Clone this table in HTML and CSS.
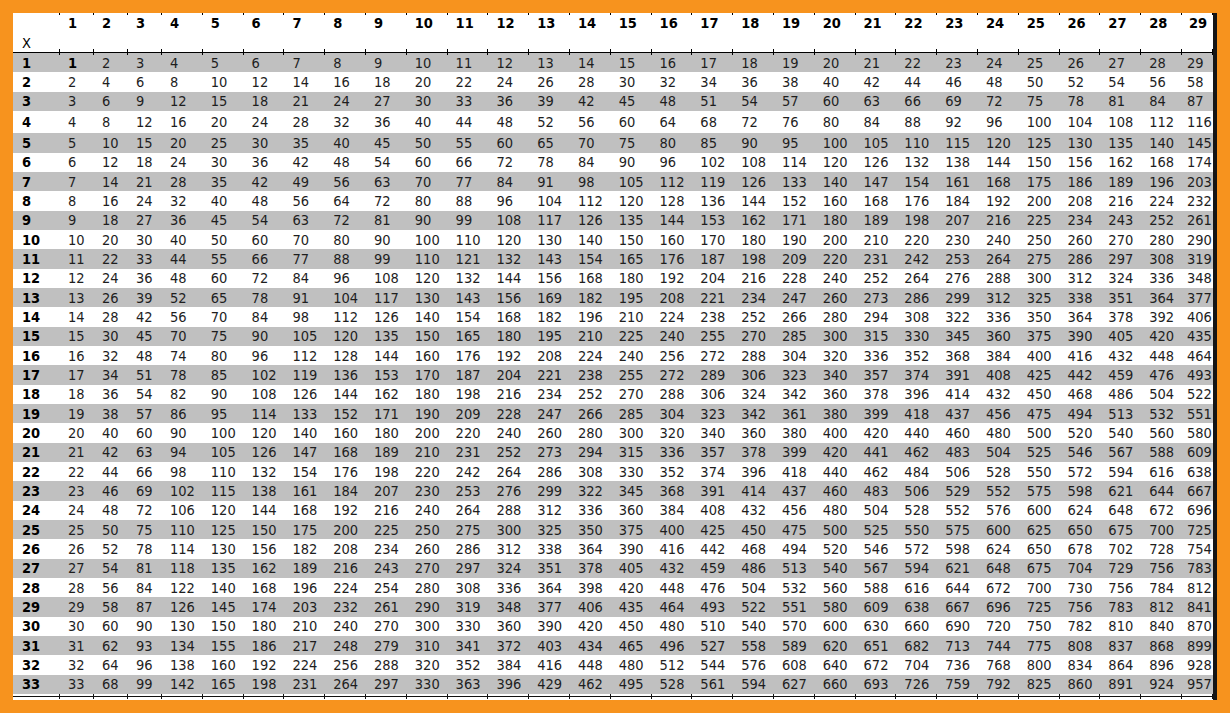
FILE: index.html
```html
<!DOCTYPE html>
<html>
<head>
<meta charset="utf-8">
<title>Multiplication table</title>
<link rel="stylesheet" href="styles.css">
</head>
<body>
<div class="sheet">
<table class="grid">
<colgroup><col class="w-lbl"><col class="w-s"><col class="w-s"><col class="w-s"><col class="w-m"><col class="w-m"><col class="w-m"><col class="w-m"><col class="w-m"><col class="w-m"><col class="w-m"><col class="w-m"><col class="w-m"><col class="w-m"><col class="w-m"><col class="w-m"><col class="w-m"><col class="w-m"><col class="w-m"><col class="w-m"><col class="w-m"><col class="w-m"><col class="w-m"><col class="w-m"><col class="w-m"><col class="w-m"><col class="w-m"><col class="w-m"><col class="w-m"><col class="w-e"></colgroup>
<thead>
<tr class="h1"><td></td><td>1</td><td>2</td><td>3</td><td>4</td><td>5</td><td>6</td><td>7</td><td>8</td><td>9</td><td>10</td><td>11</td><td>12</td><td>13</td><td>14</td><td>15</td><td>16</td><td>17</td><td>18</td><td>19</td><td>20</td><td>21</td><td>22</td><td>23</td><td>24</td><td>25</td><td>26</td><td>27</td><td>28</td><td>29</td></tr>
<tr class="h2"><td class="x">X</td><td></td><td></td><td></td><td></td><td></td><td></td><td></td><td></td><td></td><td></td><td></td><td></td><td></td><td></td><td></td><td></td><td></td><td></td><td></td><td></td><td></td><td></td><td></td><td></td><td></td><td></td><td></td><td></td><td></td></tr>
</thead>
<tbody>
<tr class="r g first"><th>1</th><td class="b">1</td><td>2</td><td>3</td><td>4</td><td>5</td><td>6</td><td>7</td><td>8</td><td>9</td><td>10</td><td>11</td><td>12</td><td>13</td><td>14</td><td>15</td><td>16</td><td>17</td><td>18</td><td>19</td><td>20</td><td>21</td><td>22</td><td>23</td><td>24</td><td>25</td><td>26</td><td>27</td><td>28</td><td>29</td></tr>
<tr class="r"><th>2</th><td>2</td><td>4</td><td>6</td><td>8</td><td>10</td><td>12</td><td>14</td><td>16</td><td>18</td><td>20</td><td>22</td><td>24</td><td>26</td><td>28</td><td>30</td><td>32</td><td>34</td><td>36</td><td>38</td><td>40</td><td>42</td><td>44</td><td>46</td><td>48</td><td>50</td><td>52</td><td>54</td><td>56</td><td>58</td></tr>
<tr class="r g"><th>3</th><td>3</td><td>6</td><td>9</td><td>12</td><td>15</td><td>18</td><td>21</td><td>24</td><td>27</td><td>30</td><td>33</td><td>36</td><td>39</td><td>42</td><td>45</td><td>48</td><td>51</td><td>54</td><td>57</td><td>60</td><td>63</td><td>66</td><td>69</td><td>72</td><td>75</td><td>78</td><td>81</td><td>84</td><td>87</td></tr>
<tr class="r tall"><th>4</th><td>4</td><td>8</td><td>12</td><td>16</td><td>20</td><td>24</td><td>28</td><td>32</td><td>36</td><td>40</td><td>44</td><td>48</td><td>52</td><td>56</td><td>60</td><td>64</td><td>68</td><td>72</td><td>76</td><td>80</td><td>84</td><td>88</td><td>92</td><td>96</td><td>100</td><td>104</td><td>108</td><td>112</td><td>116</td></tr>
<tr class="r g"><th>5</th><td>5</td><td>10</td><td>15</td><td>20</td><td>25</td><td>30</td><td>35</td><td>40</td><td>45</td><td>50</td><td>55</td><td>60</td><td>65</td><td>70</td><td>75</td><td>80</td><td>85</td><td>90</td><td>95</td><td>100</td><td>105</td><td>110</td><td>115</td><td>120</td><td>125</td><td>130</td><td>135</td><td>140</td><td>145</td></tr>
<tr class="r"><th>6</th><td>6</td><td>12</td><td>18</td><td>24</td><td>30</td><td>36</td><td>42</td><td>48</td><td>54</td><td>60</td><td>66</td><td>72</td><td>78</td><td>84</td><td>90</td><td>96</td><td>102</td><td>108</td><td>114</td><td>120</td><td>126</td><td>132</td><td>138</td><td>144</td><td>150</td><td>156</td><td>162</td><td>168</td><td>174</td></tr>
<tr class="r g"><th>7</th><td>7</td><td>14</td><td>21</td><td>28</td><td>35</td><td>42</td><td>49</td><td>56</td><td>63</td><td>70</td><td>77</td><td>84</td><td>91</td><td>98</td><td>105</td><td>112</td><td>119</td><td>126</td><td>133</td><td>140</td><td>147</td><td>154</td><td>161</td><td>168</td><td>175</td><td>186</td><td>189</td><td>196</td><td>203</td></tr>
<tr class="r"><th>8</th><td>8</td><td>16</td><td>24</td><td>32</td><td>40</td><td>48</td><td>56</td><td>64</td><td>72</td><td>80</td><td>88</td><td>96</td><td>104</td><td>112</td><td>120</td><td>128</td><td>136</td><td>144</td><td>152</td><td>160</td><td>168</td><td>176</td><td>184</td><td>192</td><td>200</td><td>208</td><td>216</td><td>224</td><td>232</td></tr>
<tr class="r g"><th>9</th><td>9</td><td>18</td><td>27</td><td>36</td><td>45</td><td>54</td><td>63</td><td>72</td><td>81</td><td>90</td><td>99</td><td>108</td><td>117</td><td>126</td><td>135</td><td>144</td><td>153</td><td>162</td><td>171</td><td>180</td><td>189</td><td>198</td><td>207</td><td>216</td><td>225</td><td>234</td><td>243</td><td>252</td><td>261</td></tr>
<tr class="r"><th>10</th><td>10</td><td>20</td><td>30</td><td>40</td><td>50</td><td>60</td><td>70</td><td>80</td><td>90</td><td>100</td><td>110</td><td>120</td><td>130</td><td>140</td><td>150</td><td>160</td><td>170</td><td>180</td><td>190</td><td>200</td><td>210</td><td>220</td><td>230</td><td>240</td><td>250</td><td>260</td><td>270</td><td>280</td><td>290</td></tr>
<tr class="r g"><th>11</th><td>11</td><td>22</td><td>33</td><td>44</td><td>55</td><td>66</td><td>77</td><td>88</td><td>99</td><td>110</td><td>121</td><td>132</td><td>143</td><td>154</td><td>165</td><td>176</td><td>187</td><td>198</td><td>209</td><td>220</td><td>231</td><td>242</td><td>253</td><td>264</td><td>275</td><td>286</td><td>297</td><td>308</td><td>319</td></tr>
<tr class="r"><th>12</th><td>12</td><td>24</td><td>36</td><td>48</td><td>60</td><td>72</td><td>84</td><td>96</td><td>108</td><td>120</td><td>132</td><td>144</td><td>156</td><td>168</td><td>180</td><td>192</td><td>204</td><td>216</td><td>228</td><td>240</td><td>252</td><td>264</td><td>276</td><td>288</td><td>300</td><td>312</td><td>324</td><td>336</td><td>348</td></tr>
<tr class="r g"><th>13</th><td>13</td><td>26</td><td>39</td><td>52</td><td>65</td><td>78</td><td>91</td><td>104</td><td>117</td><td>130</td><td>143</td><td>156</td><td>169</td><td>182</td><td>195</td><td>208</td><td>221</td><td>234</td><td>247</td><td>260</td><td>273</td><td>286</td><td>299</td><td>312</td><td>325</td><td>338</td><td>351</td><td>364</td><td>377</td></tr>
<tr class="r"><th>14</th><td>14</td><td>28</td><td>42</td><td>56</td><td>70</td><td>84</td><td>98</td><td>112</td><td>126</td><td>140</td><td>154</td><td>168</td><td>182</td><td>196</td><td>210</td><td>224</td><td>238</td><td>252</td><td>266</td><td>280</td><td>294</td><td>308</td><td>322</td><td>336</td><td>350</td><td>364</td><td>378</td><td>392</td><td>406</td></tr>
<tr class="r g"><th>15</th><td>15</td><td>30</td><td>45</td><td>70</td><td>75</td><td>90</td><td>105</td><td>120</td><td>135</td><td>150</td><td>165</td><td>180</td><td>195</td><td>210</td><td>225</td><td>240</td><td>255</td><td>270</td><td>285</td><td>300</td><td>315</td><td>330</td><td>345</td><td>360</td><td>375</td><td>390</td><td>405</td><td>420</td><td>435</td></tr>
<tr class="r"><th>16</th><td>16</td><td>32</td><td>48</td><td>74</td><td>80</td><td>96</td><td>112</td><td>128</td><td>144</td><td>160</td><td>176</td><td>192</td><td>208</td><td>224</td><td>240</td><td>256</td><td>272</td><td>288</td><td>304</td><td>320</td><td>336</td><td>352</td><td>368</td><td>384</td><td>400</td><td>416</td><td>432</td><td>448</td><td>464</td></tr>
<tr class="r g"><th>17</th><td>17</td><td>34</td><td>51</td><td>78</td><td>85</td><td>102</td><td>119</td><td>136</td><td>153</td><td>170</td><td>187</td><td>204</td><td>221</td><td>238</td><td>255</td><td>272</td><td>289</td><td>306</td><td>323</td><td>340</td><td>357</td><td>374</td><td>391</td><td>408</td><td>425</td><td>442</td><td>459</td><td>476</td><td>493</td></tr>
<tr class="r"><th>18</th><td>18</td><td>36</td><td>54</td><td>82</td><td>90</td><td>108</td><td>126</td><td>144</td><td>162</td><td>180</td><td>198</td><td>216</td><td>234</td><td>252</td><td>270</td><td>288</td><td>306</td><td>324</td><td>342</td><td>360</td><td>378</td><td>396</td><td>414</td><td>432</td><td>450</td><td>468</td><td>486</td><td>504</td><td>522</td></tr>
<tr class="r g"><th>19</th><td>19</td><td>38</td><td>57</td><td>86</td><td>95</td><td>114</td><td>133</td><td>152</td><td>171</td><td>190</td><td>209</td><td>228</td><td>247</td><td>266</td><td>285</td><td>304</td><td>323</td><td>342</td><td>361</td><td>380</td><td>399</td><td>418</td><td>437</td><td>456</td><td>475</td><td>494</td><td>513</td><td>532</td><td>551</td></tr>
<tr class="r"><th>20</th><td>20</td><td>40</td><td>60</td><td>90</td><td>100</td><td>120</td><td>140</td><td>160</td><td>180</td><td>200</td><td>220</td><td>240</td><td>260</td><td>280</td><td>300</td><td>320</td><td>340</td><td>360</td><td>380</td><td>400</td><td>420</td><td>440</td><td>460</td><td>480</td><td>500</td><td>520</td><td>540</td><td>560</td><td>580</td></tr>
<tr class="r g"><th>21</th><td>21</td><td>42</td><td>63</td><td>94</td><td>105</td><td>126</td><td>147</td><td>168</td><td>189</td><td>210</td><td>231</td><td>252</td><td>273</td><td>294</td><td>315</td><td>336</td><td>357</td><td>378</td><td>399</td><td>420</td><td>441</td><td>462</td><td>483</td><td>504</td><td>525</td><td>546</td><td>567</td><td>588</td><td>609</td></tr>
<tr class="r"><th>22</th><td>22</td><td>44</td><td>66</td><td>98</td><td>110</td><td>132</td><td>154</td><td>176</td><td>198</td><td>220</td><td>242</td><td>264</td><td>286</td><td>308</td><td>330</td><td>352</td><td>374</td><td>396</td><td>418</td><td>440</td><td>462</td><td>484</td><td>506</td><td>528</td><td>550</td><td>572</td><td>594</td><td>616</td><td>638</td></tr>
<tr class="r g"><th>23</th><td>23</td><td>46</td><td>69</td><td>102</td><td>115</td><td>138</td><td>161</td><td>184</td><td>207</td><td>230</td><td>253</td><td>276</td><td>299</td><td>322</td><td>345</td><td>368</td><td>391</td><td>414</td><td>437</td><td>460</td><td>483</td><td>506</td><td>529</td><td>552</td><td>575</td><td>598</td><td>621</td><td>644</td><td>667</td></tr>
<tr class="r"><th>24</th><td>24</td><td>48</td><td>72</td><td>106</td><td>120</td><td>144</td><td>168</td><td>192</td><td>216</td><td>240</td><td>264</td><td>288</td><td>312</td><td>336</td><td>360</td><td>384</td><td>408</td><td>432</td><td>456</td><td>480</td><td>504</td><td>528</td><td>552</td><td>576</td><td>600</td><td>624</td><td>648</td><td>672</td><td>696</td></tr>
<tr class="r g"><th>25</th><td>25</td><td>50</td><td>75</td><td>110</td><td>125</td><td>150</td><td>175</td><td>200</td><td>225</td><td>250</td><td>275</td><td>300</td><td>325</td><td>350</td><td>375</td><td>400</td><td>425</td><td>450</td><td>475</td><td>500</td><td>525</td><td>550</td><td>575</td><td>600</td><td>625</td><td>650</td><td>675</td><td>700</td><td>725</td></tr>
<tr class="r"><th>26</th><td>26</td><td>52</td><td>78</td><td>114</td><td>130</td><td>156</td><td>182</td><td>208</td><td>234</td><td>260</td><td>286</td><td>312</td><td>338</td><td>364</td><td>390</td><td>416</td><td>442</td><td>468</td><td>494</td><td>520</td><td>546</td><td>572</td><td>598</td><td>624</td><td>650</td><td>678</td><td>702</td><td>728</td><td>754</td></tr>
<tr class="r g"><th>27</th><td>27</td><td>54</td><td>81</td><td>118</td><td>135</td><td>162</td><td>189</td><td>216</td><td>243</td><td>270</td><td>297</td><td>324</td><td>351</td><td>378</td><td>405</td><td>432</td><td>459</td><td>486</td><td>513</td><td>540</td><td>567</td><td>594</td><td>621</td><td>648</td><td>675</td><td>704</td><td>729</td><td>756</td><td>783</td></tr>
<tr class="r"><th>28</th><td>28</td><td>56</td><td>84</td><td>122</td><td>140</td><td>168</td><td>196</td><td>224</td><td>254</td><td>280</td><td>308</td><td>336</td><td>364</td><td>398</td><td>420</td><td>448</td><td>476</td><td>504</td><td>532</td><td>560</td><td>588</td><td>616</td><td>644</td><td>672</td><td>700</td><td>730</td><td>756</td><td>784</td><td>812</td></tr>
<tr class="r g"><th>29</th><td>29</td><td>58</td><td>87</td><td>126</td><td>145</td><td>174</td><td>203</td><td>232</td><td>261</td><td>290</td><td>319</td><td>348</td><td>377</td><td>406</td><td>435</td><td>464</td><td>493</td><td>522</td><td>551</td><td>580</td><td>609</td><td>638</td><td>667</td><td>696</td><td>725</td><td>756</td><td>783</td><td>812</td><td>841</td></tr>
<tr class="r"><th>30</th><td>30</td><td>60</td><td>90</td><td>130</td><td>150</td><td>180</td><td>210</td><td>240</td><td>270</td><td>300</td><td>330</td><td>360</td><td>390</td><td>420</td><td>450</td><td>480</td><td>510</td><td>540</td><td>570</td><td>600</td><td>630</td><td>660</td><td>690</td><td>720</td><td>750</td><td>782</td><td>810</td><td>840</td><td>870</td></tr>
<tr class="r g"><th>31</th><td>31</td><td>62</td><td>93</td><td>134</td><td>155</td><td>186</td><td>217</td><td>248</td><td>279</td><td>310</td><td>341</td><td>372</td><td>403</td><td>434</td><td>465</td><td>496</td><td>527</td><td>558</td><td>589</td><td>620</td><td>651</td><td>682</td><td>713</td><td>744</td><td>775</td><td>808</td><td>837</td><td>868</td><td>899</td></tr>
<tr class="r"><th>32</th><td>32</td><td>64</td><td>96</td><td>138</td><td>160</td><td>192</td><td>224</td><td>256</td><td>288</td><td>320</td><td>352</td><td>384</td><td>416</td><td>448</td><td>480</td><td>512</td><td>544</td><td>576</td><td>608</td><td>640</td><td>672</td><td>704</td><td>736</td><td>768</td><td>800</td><td>834</td><td>864</td><td>896</td><td>928</td></tr>
<tr class="r g"><th>33</th><td>33</td><td>68</td><td>99</td><td>142</td><td>165</td><td>198</td><td>231</td><td>264</td><td>297</td><td>330</td><td>363</td><td>396</td><td>429</td><td>462</td><td>495</td><td>528</td><td>561</td><td>594</td><td>627</td><td>660</td><td>693</td><td>726</td><td>759</td><td>792</td><td>825</td><td>860</td><td>891</td><td>924</td><td>957</td></tr>
</tbody>
<tfoot>
<tr class="ft"><td></td><td></td><td></td><td></td><td></td><td></td><td></td><td></td><td></td><td></td><td></td><td></td><td></td><td></td><td></td><td></td><td></td><td></td><td></td><td></td><td></td><td></td><td></td><td></td><td></td><td></td><td></td><td></td><td></td><td></td></tr>
</tfoot>
</table>
</div>
</body>
</html>
```
FILE: styles.css
```css
html, body {
  margin: 0;
  padding: 0;
}

body {
  background: #f7931e;
  width: 1230px;
  height: 713px;
  overflow: hidden;
  font-family: "DejaVu Sans Condensed", "DejaVu Sans", sans-serif;
  font-stretch: condensed;
}

.sheet {
  margin: 13px 0 0 13px;
  width: 1200px;
  height: 687px;
  background: #ffffff;
  border-right: 4px solid #151515;
}

.grid {
  table-layout: fixed;
  width: 1200px;
  border-collapse: separate;
  border-spacing: 0;
  font-size: 14.5px;
  color: #1e1e1e;
}

.w-lbl { width: 47px; }
.w-s { width: 34px; }
.w-m { width: 40.8px; }
.w-e { width: 31px; }

.grid td,
.grid th {
  padding: 0 0 0 8px;
  white-space: nowrap;
  overflow: hidden;
  vertical-align: middle;
  line-height: 16px;
  text-align: left;
}

.grid td:last-child {
  padding-left: 5px;
}

.grid th {
  padding-left: 9px;
  font-weight: bold;
  color: #000;
}

.h1 td {
  height: 20px;
  font-weight: bold;
  color: #000;
  background: linear-gradient(#000, #000) right top / 1px 2px no-repeat;
}

.h1 td:last-child {
  padding-left: 7px;
}

.h2 td {
  height: 19px;
  border-bottom: 1px solid #000;
  background: linear-gradient(#000, #000) right bottom / 1px 3px no-repeat;
}

.h2 td.x {
  padding-left: 9px;
  color: #000;
}

.r td,
.r th {
  height: 19.33px;
}

.r.tall td,
.r.tall th {
  height: 22.33px;
}

.g {
  background: #c0c0c0;
}

.first td,
.first th {
  background: linear-gradient(#000, #000) right top / 1px 2px no-repeat;
}

.b {
  font-weight: bold;
  color: #000;
}

.ft td {
  height: 6px;
  padding: 0;
  background:
    linear-gradient(#111, #111) 0 2px / 100% 1px no-repeat,
    linear-gradient(#111, #111) right 0 / 1px 5px no-repeat;
}
```
